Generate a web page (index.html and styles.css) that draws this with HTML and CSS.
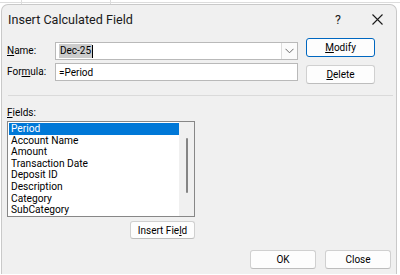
FILE: index.html
```html
<!DOCTYPE html>
<html>

<head>
	<meta charset="UTF-8">
	<title>Insert Calculated Field</title>
	<link rel="stylesheet" href="styles.css">
</head>

<body>
	<div class="dialog">
		<div class="titlebar">
			<span class="title">Insert Calculated Field</span>
			<span class="help">?</span>
			<svg class="closeIcon" width="11" height="11" viewBox="0 0 11 11">
				<path d="M0.5 0.5 L10.5 10.5 M10.5 0.5 L0.5 10.5" stroke="#1a1a1a" stroke-width="1.1" fill="none" />
			</svg>
		</div>
		<div class="top">
			<div class="fieldsCol">
				<div class="formRow">
					<label class="label"><u>N</u>ame:</label>
					<div class="input combo">
						<span class="value"><span class="selected">Dec-25</span><span class="caret"></span></span>
						<span class="dropButton">
							<svg width="9" height="6" viewBox="0 0 9 6">
								<path d="M0.5 0.8 L4.5 4.8 L8.5 0.8" stroke="#6a6a6a" stroke-width="1" fill="none" />
							</svg>
						</span>
					</div>
				</div>
				<div class="formRow">
					<label class="label">For<u>m</u>ula:</label>
					<div class="input">
						<span class="value">=Period</span>
					</div>
				</div>
			</div>
			<div class="buttonCol">
				<a class="button default"><u>M</u>odify</a>
				<a class="button"><u>D</u>elete</a>
			</div>
		</div>
		<div class="separator"></div>
		<div class="fields">
			<div class="label"><u>F</u>ields:</div>
			<div class="listBox">
				<div class="items">
					<div class="item active">Period</div>
					<div class="item">Account Name</div>
					<div class="item">Amount</div>
					<div class="item">Transaction Date</div>
					<div class="item">Deposit ID</div>
					<div class="item">Description</div>
					<div class="item">Category</div>
					<div class="item">SubCategory</div>
				</div>
				<div class="scrollTrack">
					<div class="scrollThumb"></div>
				</div>
			</div>
			<div class="insertRow">
				<a class="button insertButton">Insert Fie<u>l</u>d</a>
			</div>
		</div>
		<div class="footer">
			<a class="button">OK</a>
			<a class="button">Close</a>
		</div>
	</div>
</body>

</html>
```

FILE: styles.css
```css
html, body {
	margin: 0;
	padding: 0;
}
body {
	width: 400px;
	height: 275px;
	overflow: hidden;
	font-family: Roboto, "Liberation Sans", sans-serif;
	color: #000000;
	background-color: #ffffff;
	background-image:
		linear-gradient(#dcdcdc, #dcdcdc),
		linear-gradient(#dcdcdc, #dcdcdc),
		linear-gradient(#dcdcdc, #dcdcdc);
	background-size: 100% 1px, 1px 4px, 1px 4px;
	background-position: 0 2px, 21px 0, 110px 0;
	background-repeat: no-repeat;
	padding-top: 4px;
	padding-left: 1px;
	box-sizing: border-box;
}
.dialog {
	width: 396px;
	height: 270px;
	background: #f0f0f0;
	border: 1px solid #c9c9c9;
	border-bottom: none;
	border-radius: 7px 7px 0 0;
	box-sizing: border-box;
	display: flex;
	flex-direction: column;
}
.titlebar {
	display: flex;
	align-items: center;
	height: 28px;
	padding: 0 0 0 6px;
}
.title {
	flex: 1;
	font-size: 12.6px;
	color: #1a1a1a;
}
.help {
	font-size: 12.5px;
	margin-right: 31px;
	color: #1a1a1a;
}
.closeIcon {
	margin-right: 13px;
}
.top {
	display: flex;
	padding: 5px 0 0 5px;
}
.fieldsCol {
	display: flex;
	flex-direction: column;
	gap: 3px;
	padding-top: 4px;
}
.formRow {
	display: flex;
	align-items: center;
}
.label {
	width: 48px;
	font-size: 10px;
	line-height: 14px;
}
.input {
	width: 243px;
	height: 18px;
	box-sizing: border-box;
	background: #ffffff;
	border: 1px solid #b9b9b9;
	display: flex;
	align-items: center;
	font-size: 10px;
}
.value {
	flex: 1;
	padding-left: 3px;
	display: flex;
	align-items: center;
}
.selected {
	background: #cccccc;
	padding: 0 1px;
	line-height: 14px;
}
.caret {
	width: 1px;
	height: 13px;
	background: #000000;
}
.dropButton {
	width: 15px;
	height: 16px;
	border-left: 1px solid #dcdcdc;
	display: flex;
	align-items: center;
	justify-content: center;
	background: #fbfbfb;
}
.buttonCol {
	display: flex;
	flex-direction: column;
	gap: 8px;
	margin-left: 8px;
}
.button {
	display: inline-flex;
	align-items: center;
	justify-content: center;
	width: 69px;
	height: 19px;
	box-sizing: border-box;
	background: #fdfdfd;
	border: 1px solid #d0d0d0;
	border-bottom-color: #bdbdbd;
	border-radius: 3px;
	font-size: 10px;
	color: #000000;
	cursor: default;
}
.button.default {
	border: 1.5px solid #0067c0;
}
.separator {
	height: 1px;
	background: #dadada;
	margin: 11px 3px 0 6px;
}
.fields {
	padding: 10px 0 0 5px;
	display: flex;
	flex-direction: column;
}
.listBox {
	margin-top: 1px;
	width: 188px;
	height: 96px;
	box-sizing: border-box;
	border: 1px solid #878787;
	background: #ffffff;
	display: flex;
}
.items {
	flex: 1;
	padding: 1px 0 0 1px;
}
.item {
	height: 11.6px;
	line-height: 11.6px;
	font-size: 10.2px;
	padding-left: 2px;
	white-space: nowrap;
}
.item.active {
	background: #0078d7;
	color: #ffffff;
}
.scrollTrack {
	width: 15px;
	background: #f0f0f0;
	display: flex;
	justify-content: center;
	padding-top: 16px;
	box-sizing: border-box;
}
.scrollThumb {
	width: 2px;
	height: 55px;
	background: #858585;
	border-radius: 1px;
}
.insertRow {
	width: 188px;
	display: flex;
	justify-content: flex-end;
	margin-top: 4px;
}
.insertButton {
	width: 65px;
	height: 18px;
}
.footer {
	display: flex;
	justify-content: flex-end;
	gap: 9px;
	padding: 11px 5px 0 0;
}
.footer .button {
	width: 66px;
}
```
